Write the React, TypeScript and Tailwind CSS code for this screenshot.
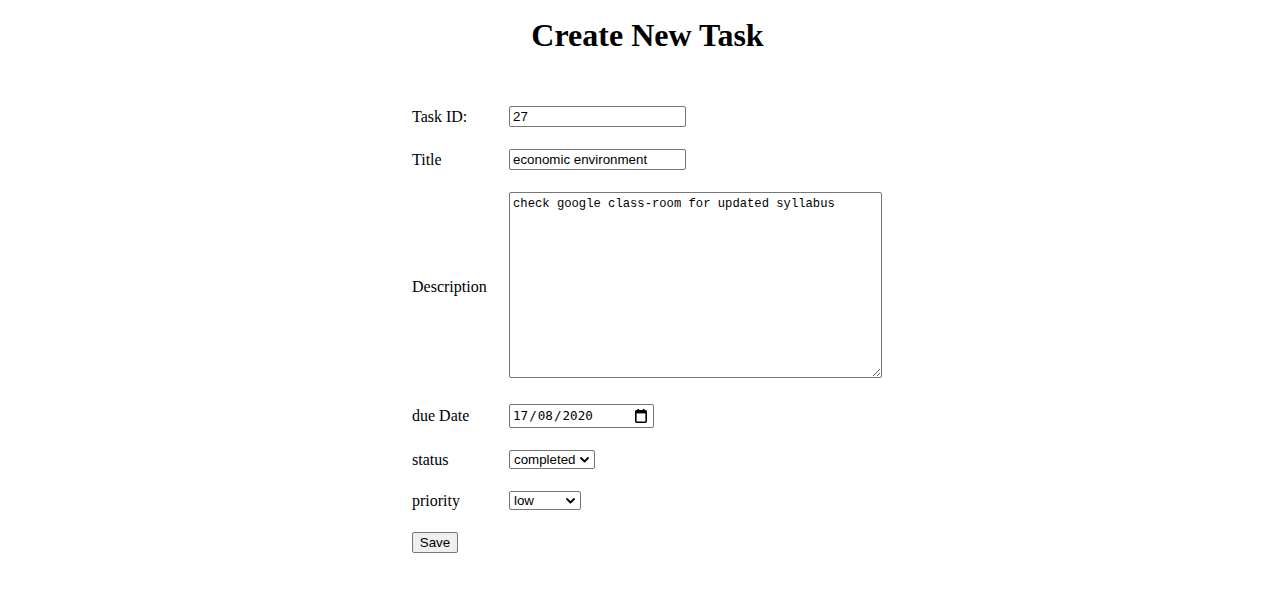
import React from "react";

const serif = { fontFamily: '"Liberation Serif", "Times New Roman", serif' };

function Label({ children, className = "" }: { children: React.ReactNode; className?: string }) {
  return (
    <div className={`w-[97px] shrink-0 text-[16px] leading-[18px] text-black ${className}`} style={serif}>
      {children}
    </div>
  );
}

function Chevron() {
  return (
    <svg width="9" height="6" viewBox="0 0 9 6" className="pointer-events-none absolute right-[6px] top-[7px]">
      <path d="M1 1 L4.5 4.5 L8 1" fill="none" stroke="#000" strokeWidth="1.8" strokeLinecap="round" strokeLinejoin="round" />
    </svg>
  );
}

export default function App() {
  const sans = "font-['Liberation_Sans',Arial,sans-serif]";
  return (
    <div className="min-h-[606px] w-full bg-white text-black" style={serif}>
      <h1 className="pt-[17px] pl-[27px] text-center text-[32px] font-bold leading-[36px]" style={serif}>
        Create New Task
      </h1>
      <form className="ml-[412px] mt-[53px] flex flex-col" onSubmit={(e) => e.preventDefault()}>
        <div className="flex items-center">
          <Label>Task ID:</Label>
          <input
            defaultValue="27"
            className={`h-[21px] w-[177px] rounded-[2px] border border-[#767676] bg-white px-[3px] text-[13.33px] text-black outline-none ${sans}`}
          />
        </div>
        <div className="mt-[22px] flex items-center">
          <Label>Title</Label>
          <input
            defaultValue="economic environment"
            className={`h-[21px] w-[177px] rounded-[2px] border border-[#767676] bg-white px-[3px] text-[13.33px] text-black outline-none ${sans}`}
          />
        </div>
        <div className="mt-[22px] flex items-center">
          <Label className="pt-[4px]">Description</Label>
          <textarea
            defaultValue="check google class-room for updated syllabus"
            className="block h-[186px] w-[373px] resize rounded-[2px] border border-[#767676] bg-white px-[3px] pt-[4px] pb-[3px] text-[12.2px] leading-[15px] text-black outline-none font-['Liberation_Mono','DejaVu_Sans_Mono',monospace]"
          />
        </div>
        <div className="mt-[26px] flex items-center">
          <Label>due Date</Label>
          <div className="flex h-[24px] w-[145px] items-center justify-between rounded-[2px] border border-[#767676] bg-white pl-[3px] pr-[6px]">
            <span className="text-[12.6px] text-black font-['DejaVu_Sans_Mono','Liberation_Mono',monospace]">
              17<span className="mx-[1px]">/</span>08<span className="mx-[1px]">/</span>2020
            </span>
            <svg width="12" height="14" viewBox="0 0 12 14">
              <rect x="2.5" y="0" width="1.6" height="3" fill="#000" />
              <rect x="7.9" y="0" width="1.6" height="3" fill="#000" />
              <rect x="0.8" y="1.8" width="10.4" height="11.4" rx="1" fill="none" stroke="#000" strokeWidth="1.6" />
              <rect x="0.8" y="1.8" width="10.4" height="2.6" fill="#000" />
            </svg>
          </div>
        </div>
        <div className="mt-[22px] flex items-center">
          <Label>status</Label>
          <div className="relative">
            <select
              defaultValue="completed"
              className={`block h-[19px] w-[86px] appearance-none rounded-[2px] border border-[#767676] bg-white pl-[4px] text-[13.33px] leading-[17px] text-black outline-none ${sans}`}
            >
              <option value="pending">pending</option>
              <option value="completed">completed</option>
            </select>
            <Chevron />
          </div>
        </div>
        <div className="mt-[22px] flex items-center">
          <Label>priority</Label>
          <div className="relative">
            <select
              defaultValue="low"
              className={`block h-[19px] w-[72px] appearance-none rounded-[2px] border border-[#767676] bg-white pl-[4px] text-[13.33px] leading-[17px] text-black outline-none ${sans}`}
            >
              <option value="low">low</option>
              <option value="medium">medium</option>
              <option value="high">high</option>
            </select>
            <Chevron />
          </div>
        </div>
        <div className="mt-[22px] flex">
          <button
            type="submit"
            className={`h-[21px] w-[46px] rounded-[2px] border border-[#767676] bg-[#efefef] text-[13.33px] leading-[19px] text-black ${sans}`}
          >
            Save
          </button>
        </div>
      </form>
    </div>
  );
}
